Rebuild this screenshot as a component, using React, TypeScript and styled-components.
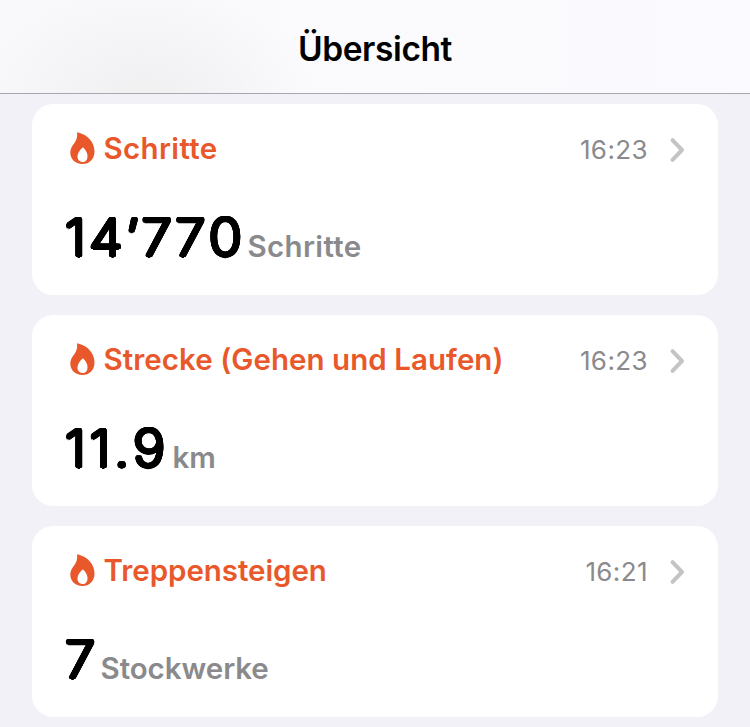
import styled, { createGlobalStyle } from 'styled-components'

const GlobalStyle = createGlobalStyle`
  * {
    box-sizing: border-box;
    margin: 0;
    padding: 0;
  }
  body {
    background: #f2f1f8;
    font-family: Inter, 'Liberation Sans', sans-serif;
    overflow: hidden;
  }
  ul {
    list-style: none;
  }
`
const Wrapper = styled.main`
  height: 727px;
  overflow: hidden;
  background: #f2f1f8;
`
const Header = styled.header`
  height: 94px;
  padding-top: 5px;
  border-bottom: 1px solid #a9a9ad;
  display: flex;
  align-items: center;
  justify-content: center;
  background:
    radial-gradient(ellipse 170px 125px at 145px 105px, rgba(239, 239, 240, 1) 0%, rgba(241, 241, 243, 0.75) 40%, rgba(249, 249, 251, 0) 100%),
    linear-gradient(90deg, #f9f9fb, #fbfbfd 50%, #fafaff);
  h1 {
    font-size: 33.5px;
    font-weight: 600;
    letter-spacing: -0.4px;
    color: #000;
  }
`
const List = styled.ul`
  padding: 10px 32px;
  display: flex;
  flex-direction: column;
  gap: 20px;
`
const Card = styled.li`
  height: 191px;
  padding: 25px 33px 0;
  border-radius: 21px;
  background: #fff;
`
const CardHeader = styled.div`
  height: 38px;
  display: flex;
  align-items: center;
  .flame {
    width: 25px;
    height: 32px;
    margin: 0 9px 0 4.5px;
  }
  .chevron {
    width: 16px;
    height: 26px;
    margin: 4px 0 0 21px;
  }
`
const Label = styled.h2<{ $spacing: number }>`
  font-size: 29.5px;
  font-weight: 600;
  line-height: 38px;
  letter-spacing: ${(props) => props.$spacing}px;
  white-space: nowrap;
  color: #e9582b;
`
const Time = styled.time`
  margin: 3px 0 0 auto;
  font-size: 26px;
  line-height: 38px;
  letter-spacing: 0.4px;
  color: #8a8a8d;
`
const Reading = styled.p`
  margin-top: 37px;
  display: flex;
  align-items: baseline;
  line-height: 70px;
  white-space: nowrap;
`
// offsets on a circle, they thicken the light digits and round their ends
const roundOutline = (radius: number) =>
  Array.from({ length: 24 }, (_, i) => {
    const angle = (i * Math.PI) / 12
    return `${(Math.cos(angle) * radius).toFixed(2)}px ${(Math.sin(angle) * radius).toFixed(2)}px 0 #000`
  }).join(', ')
const Amount = styled.span<{ $width: number; $spacing: number }>`
  width: ${(props) => props.$width}px;
  font-size: 51px;
  font-weight: 200;
  font-kerning: none;
  letter-spacing: ${(props) => props.$spacing}px;
  color: #000;
  text-shadow: ${roundOutline(2)};
  transform: translateY(-1.5px) scaleX(1.07);
  transform-origin: left;
`
const Unit = styled.span<{ $spacing: number }>`
  margin-left: 8px;
  font-size: 29.5px;
  font-weight: 600;
  letter-spacing: ${(props) => props.$spacing}px;
  color: #8a8a8d;
`
const Flame = () => (
  <svg className="flame" viewBox="0 0 25 32">
    <path
      fill="#e9582b"
      fillRule="evenodd"
      d="M8.2.4C7.600.1 7 .5 7.100 1.200C7.500 6.500 5.700 9.300 3.300 12.600C1.300 15.500.3 17.800.3 20.600C.3 27.300 5.200 32 12.300 32C19.600 32 24.500 26.800 24.500 19.400C24.500 10.500 18.300 3 8.200.4ZM12.400 15.800C12.700 15.500 13.100 15.500 13.400 15.800C16.200 18.600 17.500 21.200 17.500 24.200C17.500 27.800 15.600 30 12.500 30C9.400 30 7.500 27.800 7.500 24.600C7.500 21.200 9.500 18.600 12.400 15.800Z"
    />
  </svg>
)
const Chevron = () => (
  <svg className="chevron" viewBox="0 0 16 26" fill="none">
    <path d="M3.500 3.200L13 13L3.500 22.800" stroke="#c4c4c6" strokeWidth="4" strokeLinecap="round" strokeLinejoin="round" />
  </svg>
)
const entries = [
  { label: 'Schritte', labelSpacing: 0.35, time: '16:23', amount: '14’770', amountWidth: 174.5, amountSpacing: 3.2, unit: 'Schritte', unitSpacing: 0.35 },
  { label: 'Strecke (Gehen und Laufen)', labelSpacing: 0.05, time: '16:23', amount: '11.9', amountWidth: 99.5, amountSpacing: 3.6, unit: 'km', unitSpacing: 0 },
  { label: 'Treppensteigen', labelSpacing: -0.05, time: '16:21', amount: '7', amountWidth: 27.5, amountSpacing: 0, unit: 'Stockwerke', unitSpacing: -0.05 },
]
const App = () => {
  return (
    <>
      <GlobalStyle />
      <Wrapper>
        <Header>
          <h1>Übersicht</h1>
        </Header>
        <List>
          {entries.map((entry) => (
            <Card key={entry.label}>
              <CardHeader>
                <Flame />
                <Label $spacing={entry.labelSpacing}>{entry.label}</Label>
                <Time>{entry.time}</Time>
                <Chevron />
              </CardHeader>
              <Reading>
                <Amount $width={entry.amountWidth} $spacing={entry.amountSpacing}>
                  {entry.amount}
                </Amount>
                <Unit $spacing={entry.unitSpacing}>{entry.unit}</Unit>
              </Reading>
            </Card>
          ))}
        </List>
      </Wrapper>
    </>
  )
}
export default App
